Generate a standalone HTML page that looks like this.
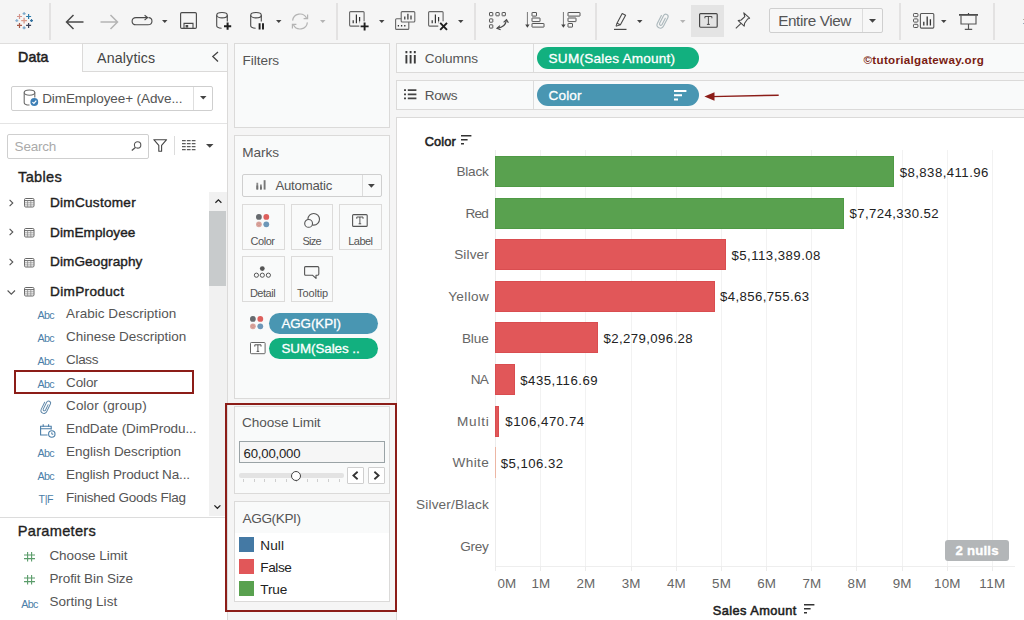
<!DOCTYPE html>
<html><head><meta charset="utf-8"><title>Tableau</title>
<style>
*{box-sizing:border-box;margin:0;padding:0}
html,body{width:1024px;height:620px;overflow:hidden;background:#f5f5f5;font-family:"Liberation Sans",sans-serif;color:#333}
.abs{position:absolute}
.card{position:absolute;background:#f9fafa;border:1px solid #d6d6d6}
.t{position:absolute;white-space:nowrap}
.pill{position:absolute;border-radius:11px}
svg{position:absolute;overflow:visible}
#root{position:absolute;left:0;top:0;width:1024px;height:620px;overflow:hidden}
</style></head><body><div id="root">
<!-- toolbar -->
<div class="abs" style="left:0px;top:0px;width:1024px;height:43px;background:#f5f5f5;"></div>
<div class="abs" style="left:49px;top:2.5px;width:2px;height:37.5px;background:#e3e2e2;"></div>
<div class="abs" style="left:336px;top:2.5px;width:2px;height:37.5px;background:#e3e2e2;"></div>
<div class="abs" style="left:473.5px;top:2.5px;width:2px;height:37.5px;background:#e3e2e2;"></div>
<div class="abs" style="left:594.5px;top:2.5px;width:2px;height:37.5px;background:#e3e2e2;"></div>
<div class="abs" style="left:899px;top:2.5px;width:2px;height:37.5px;background:#e3e2e2;"></div>
<div class="abs" style="left:993px;top:2.5px;width:2px;height:37.5px;background:#e3e2e2;"></div>
<svg style="left:0px;top:0px" width="40" height="40"><path d="M21.200000000000003 20.6H27.0M24.1 17.700000000000003V23.5" stroke="#da9a8a" stroke-width="1.3"/><path d="M17.0 16.5H22.0M19.5 14.0V19.0" stroke="#d3948c" stroke-width="1.2"/><path d="M26.1 16.5H31.1M28.6 14.0V19.0" stroke="#2f7dab" stroke-width="1.2"/><path d="M17.0 25.4H22.0M19.5 22.9V27.9" stroke="#a85a48" stroke-width="1.2"/><path d="M26.1 25.4H31.1M28.6 22.9V27.9" stroke="#3d4258" stroke-width="1.2"/><path d="M22.6 13.6H25.6M24.1 12.1V15.1" stroke="#7ea9ca" stroke-width="1.2"/><path d="M22.6 27.8H25.6M24.1 26.3V29.3" stroke="#6f9fc6" stroke-width="1.2"/><path d="M15.3 20.6H18.3M16.8 19.1V22.1" stroke="#86aed0" stroke-width="1.2"/><path d="M30.0 20.6H33.0M31.5 19.1V22.1" stroke="#3574a3" stroke-width="1.2"/></svg>
<svg style="left:65px;top:13.5px" width="19" height="16"><path d="M18.5 8H1.5M8.5 1L1.5 8L8.5 15" fill="none" stroke="#4a4a4a" stroke-width="1.5"/></svg>
<svg style="left:100px;top:13.5px" width="19" height="16"><path d="M0.5 8H17.5M10.5 1L17.5 8L10.5 15" fill="none" stroke="#b4b4b4" stroke-width="1.5"/></svg>
<svg style="left:131px;top:15px" width="22" height="11"><path d="M16.5 2.6H5 C-0.2 2.6 -0.2 9.8 5 9.8H17 C22.2 9.8 22.2 2.6 17.5 2.6" fill="none" stroke="#4a4a4a" stroke-width="1.1"/><path d="M13.6 0.2L16.6 2.6L13.6 5" fill="none" stroke="#4a4a4a" stroke-width="1.1"/></svg>
<svg style="left:162px;top:20px" width="5.5" height="3"><path d="M0 0H5.5L2.75 3Z" fill="#444"/></svg>
<svg style="left:180px;top:11.8px" width="17" height="17"><rect x=".6" y=".6" width="15.8" height="15.8" rx="1.2" fill="none" stroke="#4a4a4a" stroke-width="1.15"/><path d="M4 16V11.4H13V16" fill="none" stroke="#4a4a4a" stroke-width="1.1"/><rect x="5.6" y="13" width="2.6" height="2.6" fill="#4a4a4a"/></svg>
<svg style="left:215.5px;top:12.3px" width="16" height="18"><ellipse cx="6" cy="3.2" rx="5.3" ry="2.7" fill="none" stroke="#4a4a4a" stroke-width="1.1"/><path d="M.7 3.2V13.6C.7 15.2 3 16.2 5.6 16.2" fill="none" stroke="#4a4a4a" stroke-width="1.1"/><path d="M11.3 3.2V9.5" fill="none" stroke="#4a4a4a" stroke-width="1.1"/><path d="M8 14.2H15.2M11.6 10.6V17.8" stroke="#1e1e1e" stroke-width="2"/></svg>
<svg style="left:249.5px;top:12.3px" width="16" height="18"><ellipse cx="6" cy="3.2" rx="5.3" ry="2.7" fill="none" stroke="#4a4a4a" stroke-width="1.1"/><path d="M.7 3.2V13.6C.7 15.2 3 16.2 5.6 16.2" fill="none" stroke="#4a4a4a" stroke-width="1.1"/><path d="M11.3 3.2V9.5" fill="none" stroke="#4a4a4a" stroke-width="1.1"/><path d="M9.6 11.3V17.6M13 11.3V17.6" stroke="#1e1e1e" stroke-width="1.9"/></svg>
<svg style="left:276px;top:20px" width="5.5" height="3"><path d="M0 0H5.5L2.75 3Z" fill="#444"/></svg>
<svg style="left:291px;top:12.5px" width="18" height="17"><path d="M15.6 5.2A7.4 7.4 0 0 0 1.6 7.6" fill="none" stroke="#b4b4b4" stroke-width="1.2"/><path d="M2.4 11.8A7.4 7.4 0 0 0 16.4 9.4" fill="none" stroke="#b4b4b4" stroke-width="1.2"/><path d="M16.6 1.6V5.6H12.6" fill="none" stroke="#b4b4b4" stroke-width="1.2"/><path d="M1.4 15.4V11.4H5.4" fill="none" stroke="#b4b4b4" stroke-width="1.2"/></svg>
<svg style="left:319.5px;top:20px" width="5.5" height="3"><path d="M0 0H5.5L2.75 3Z" fill="#b4b4b4"/></svg>
<svg style="left:349px;top:11.3px" width="20" height="19"><rect x="0.6" y="0.6" width="14.5" height="14.5" rx="1" fill="#f5f5f5" stroke="#666" stroke-width="1.1"/><path d="M4.2 12.3V9.3M7.4 12.3V3.6M10.6 12.3V6" stroke="#333" stroke-width="1.2"/><rect x="10.3" y="10.3" width="10" height="9.5" fill="#f5f5f5"/><path d="M11.6 15.4H19.6M15.6 11.4V19.4" stroke="#1e1e1e" stroke-width="1.9"/></svg>
<svg style="left:379px;top:20px" width="5.5" height="3"><path d="M0 0H5.5L2.75 3Z" fill="#444"/></svg>
<svg style="left:395px;top:11.3px" width="20" height="19"><rect x="0.6" y="7.8" width="13.2" height="10.6" rx="1" fill="#f5f5f5" stroke="#666" stroke-width="1.1"/><path d="M3.4 15.6V14M6.6 15.6V14M9.8 15.6V14" stroke="#333" stroke-width="1.3"/><rect x="6.199999999999999" y="0.6" width="13.6" height="10.4" rx="1" fill="#f5f5f5" stroke="#666" stroke-width="1.1"/><path d="M9.8 8.4V5.6M12.9 8.4V2.8M16 8.4V4.4" stroke="#333" stroke-width="1.2"/></svg>
<svg style="left:428px;top:11.3px" width="20" height="19"><rect x="0.6" y="0.6" width="14.5" height="14.5" rx="1" fill="#f5f5f5" stroke="#666" stroke-width="1.1"/><path d="M4.2 12.3V9.3M7.4 12.3V3.6M10.6 12.3V6" stroke="#333" stroke-width="1.2"/><rect x="10.3" y="10.3" width="10" height="9.5" fill="#f5f5f5"/><path d="M12.2 11.8L19 18.8M19 11.8L12.2 18.8" stroke="#1e1e1e" stroke-width="1.9"/></svg>
<svg style="left:457.5px;top:20px" width="5.5" height="3"><path d="M0 0H5.5L2.75 3Z" fill="#444"/></svg>
<svg style="left:489.4px;top:11.9px" width="20" height="19"><rect x="0.5" y="0.5" width="3.3" height="3.3" rx=".4" fill="none" stroke="#555" stroke-width="1"/><rect x="6.9" y="0.5" width="3.3" height="3.3" rx=".4" fill="none" stroke="#555" stroke-width="1"/><rect x="13.1" y="0.5" width="3.3" height="3.3" rx=".4" fill="none" stroke="#555" stroke-width="1"/><rect x="0.5" y="6.9" width="3.3" height="3.3" rx=".4" fill="none" stroke="#555" stroke-width="1"/><rect x="0.5" y="12.8" width="3.3" height="3.3" rx=".4" fill="none" stroke="#555" stroke-width="1"/><path d="M8.6 16.2C13.6 15.6 16.8 12.6 17.4 8.2" fill="none" stroke="#4a4a4a" stroke-width="1.2"/><path d="M11 13.6L8 16.3L11.6 17.8" fill="none" stroke="#4a4a4a" stroke-width="1.2"/><path d="M14.6 10.4L17.5 7.6L19.4 10.8" fill="none" stroke="#4a4a4a" stroke-width="1.2"/></svg>
<svg style="left:525px;top:12px" width="20" height="17"><path d="M2.4 0V14" stroke="#777" stroke-width="1"/><path d="M0.2 12.6L2.4 15.8L4.6 12.6Z" fill="#444"/><rect x="7" y="0.5" width="4.5" height="3.6" rx=".3" fill="none" stroke="#555" stroke-width="1"/><rect x="7" y="6" width="8" height="3.6" rx=".3" fill="none" stroke="#555" stroke-width="1"/><rect x="7" y="11.5" width="12" height="3.6" rx=".3" fill="none" stroke="#555" stroke-width="1"/></svg>
<svg style="left:560.5px;top:12px" width="20" height="17"><path d="M2.4 0V14" stroke="#777" stroke-width="1"/><path d="M0.2 12.6L2.4 15.8L4.6 12.6Z" fill="#444"/><rect x="7" y="0.5" width="12" height="3.6" rx=".3" fill="none" stroke="#555" stroke-width="1"/><rect x="7" y="6" width="8" height="3.6" rx=".3" fill="none" stroke="#555" stroke-width="1"/><rect x="7" y="11.5" width="4.5" height="3.6" rx=".3" fill="none" stroke="#555" stroke-width="1"/></svg>
<svg style="left:613.5px;top:13px" width="13" height="17"><path d="M8.2 .6L11.6 2.2L6.4 11.8L3 10.2Z" fill="none" stroke="#4a4a4a" stroke-width="1.1" stroke-linejoin="round"/><path d="M3 10.2L2 13.2L6.4 11.8" fill="none" stroke="#4a4a4a" stroke-width="1"/><path d="M0 16.4H12.5" stroke="#4a4a4a" stroke-width="1.2"/></svg>
<svg style="left:637px;top:20px" width="5.5" height="3"><path d="M0 0H5.5L2.75 3Z" fill="#444"/></svg>
<svg style="left:0;top:0" width="1" height="1"><path transform="translate(662.8 20.7) rotate(27) scale(1.25)" d="M0.9 -2.6V3A1.1 1.1 0 0 1 -1.3 3V-4A1.9 1.9 0 0 1 2.5 -4V3.8A2.7 2.7 0 0 1 -2.9 3.8V-3.2" fill="none" stroke="#adb9bd" stroke-width="0.92" stroke-linecap="round"/></svg>
<svg style="left:680px;top:20px" width="5.5" height="3"><path d="M0 0H5.5L2.75 3Z" fill="#b4b4b4"/></svg>
<div class="abs" style="left:691px;top:4.5px;width:33px;height:32.5px;background:#e4e4e4;"></div>
<svg style="left:698.6px;top:12.9px" width="19" height="15"><rect x=".6" y=".6" width="17.6" height="13.6" rx="1" fill="none" stroke="#444" stroke-width="1.15"/><path d="M5.9 3.5H12.9V5.3M5.9 5.3V3.5M9.4 3.5V11.4M7.9 11.4H10.9" fill="none" stroke="#333" stroke-width=".85"/></svg>
<svg style="left:735px;top:11.6px" width="16" height="17"><path d="M8.8 .8L14.6 6.2L12.6 7L9.6 11.2L9.2 14.2L3.2 8.6L6.2 8L9.8 4.6Z" fill="none" stroke="#4a4a4a" stroke-width="1.1" stroke-linejoin="round"/><path d="M6 11.4L.8 16.4" stroke="#4a4a4a" stroke-width="1.1"/></svg>
<div class="abs" style="left:769px;top:8px;width:114px;height:24.5px;background:#f7f7f7;border:1px solid #cfcfcf;border-radius:2px;"></div>
<div class="abs" style="left:862px;top:9px;width:1px;height:22.5px;background:#dcdcdc;"></div>
<div class="t" style="top:12px;font-size:15.3px;line-height:18px;color:#555;left:778.2px;letter-spacing:-0.390px;">Entire View</div>
<svg style="left:868.7px;top:19px" width="7" height="3.8"><path d="M0 0H7L3.5 3.8Z" fill="#444"/></svg>
<svg style="left:913.2px;top:12.9px" width="22" height="17"><rect x=".5" y="0.5" width="4.4" height="3.2" rx=".8" fill="none" stroke="#555" stroke-width="1"/><rect x=".5" y="5.9" width="4.4" height="3.2" rx=".8" fill="none" stroke="#555" stroke-width="1"/><rect x=".5" y="11.3" width="4.4" height="3.2" rx=".8" fill="none" stroke="#555" stroke-width="1"/><rect x="7.4" y=".5" width="13.4" height="14.6" rx="1" fill="none" stroke="#555" stroke-width="1.1"/><path d="M10.8 12.6V8.8M14.2 12.6V3.6M17.4 12.6V6.2" stroke="#333" stroke-width="1.3"/></svg>
<svg style="left:941px;top:20px" width="5.5" height="3"><path d="M0 0H5.5L2.75 3Z" fill="#444"/></svg>
<svg style="left:959px;top:12.6px" width="19" height="18"><path d="M0 1.9H19" stroke="#444" stroke-width="1.7"/><path d="M9.5 0V1.6" stroke="#444" stroke-width="1.2"/><path d="M2 2.4V11H17V2.4" fill="none" stroke="#555" stroke-width="1.15"/><path d="M9.5 11V16M5.8 16.3H13.2" stroke="#555" stroke-width="1.15"/></svg>
<div class="abs" style="left:1023px;top:18.6px;width:1px;height:1.4px;background:#b5b0a0;"></div>
<div class="abs" style="left:1023px;top:22.8px;width:1px;height:1.4px;background:#9ab;"></div>
<!-- left pane -->
<div class="abs" style="left:0px;top:43px;width:228px;height:577px;background:#fff;border:none;border-right:1px solid #dbdad9;border-top:1px solid #dfdedd;"></div>
<div class="abs" style="left:82px;top:43px;width:146px;height:29px;background:#f9fafa;border:1px solid #dbdad9;"></div>
<div class="t" style="top:49px;font-size:14.2px;line-height:17px;color:#1e1e1e;left:18px;-webkit-text-stroke:0.55px #1e1e1e;letter-spacing:0.158px;">Data</div>
<div class="t" style="top:50px;font-size:14.2px;line-height:17px;color:#444;left:97px;letter-spacing:0.180px;">Analytics</div>
<svg style="left:211px;top:51px" width="9" height="12"><path d="M7 1 L1.8 5.5 L7 10.5" fill="none" stroke="#444" stroke-width="1.3"/></svg>
<div class="abs" style="left:11px;top:86px;width:202px;height:24.5px;background:#fff;border:1px solid #cfcfcf;border-radius:2px;"></div>
<div class="abs" style="left:192.5px;top:87px;width:1px;height:22.5px;background:#dedede;"></div>
<svg style="left:23px;top:89px" width="17" height="18" viewBox="0 0 17 18"><ellipse cx="6.5" cy="3.6" rx="5.3" ry="2.6" fill="#fff" stroke="#6b6b6b" stroke-width="1.1"/><path d="M1.2 3.6 V13.4 C1.2 15 3.6 16 6.5 16" fill="none" stroke="#6b6b6b" stroke-width="1.1"/><path d="M11.8 3.6 V8.6" fill="none" stroke="#6b6b6b" stroke-width="1.1"/><circle cx="11.3" cy="13" r="3.9" fill="#3d7fb6"/><path d="M9.4 13.1 L10.9 14.5 L13.3 11.7" fill="none" stroke="#fff" stroke-width="1.2"/></svg>
<div class="t" style="top:91px;font-size:13.5px;line-height:16px;color:#555;left:42.2px;letter-spacing:-0.095px;">DimEmployee+ (Adve...</div>
<svg style="left:200px;top:96.3px" width="6.5" height="3.6"><path d="M0 0H6.5L3.25 3.6Z" fill="#444"/></svg>
<div class="abs" style="left:0px;top:122.5px;width:227px;height:1px;background:#e4e4e4;"></div>
<div class="abs" style="left:7px;top:134px;width:142px;height:24.5px;background:#fff;border:1px solid #cfcfcf;border-radius:2px;"></div>
<div class="t" style="top:139px;font-size:13.5px;line-height:16px;color:#aaa;left:14.6px;letter-spacing:-0.197px;">Search</div>
<svg style="left:130.5px;top:141px" width="11" height="10" viewBox="0 0 11 10"><circle cx="6.6" cy="3.9" r="3.2" fill="none" stroke="#555" stroke-width="1.1"/><path d="M4.4 6.4 L0.8 9.6" stroke="#555" stroke-width="1.3"/></svg>
<svg style="left:153px;top:139.3px" width="15" height="13" viewBox="0 0 15 13"><path d="M0.8 0.7 H13.6 L8.6 6.4 V12.3 H5.8 V6.4 Z" fill="none" stroke="#444" stroke-width="1.1" stroke-linejoin="round"/></svg>
<div class="abs" style="left:174px;top:136px;width:1px;height:19px;background:#dcdcdc;"></div>
<svg style="left:181.7px;top:139.9px" width="13.5" height="10.2" viewBox="0 0 13.5 10.2"><g stroke="#5c5c5c" stroke-width="1.1"><path d="M0 .6H13.5M0 3.6H13.5M0 6.6H13.5M0 9.6H13.5" stroke-dasharray="3.7 1.2"/></g></svg>
<svg style="left:205.5px;top:144px" width="7.5" height="3.8"><path d="M0 0H7.5L3.75 3.8Z" fill="#444"/></svg>
<div class="t" style="top:168px;font-size:14.6px;line-height:18px;color:#1e1e1e;left:18px;-webkit-text-stroke:0.35px #1e1e1e;letter-spacing:0.335px;">Tables</div>
<svg style="left:8.5px;top:198.7px" width="5" height="8"><path d="M0.6 0.8 L3.8 4 L0.6 7.2" fill="none" stroke="#555" stroke-width="1.1"/></svg>
<svg style="left:24.3px;top:198.2px" width="10.5" height="9.5" viewBox="0 0 10.5 9.5"><rect x=".5" y=".5" width="9.5" height="8.5" rx="1.2" fill="#fff" stroke="#666"/><path d="M.5 2.6H10" stroke="#666" stroke-width="1"/><path d="M.5 4.8H10M.5 6.9H10M3.6 2.6V9M6.8 2.6V9" stroke="#8a8a8a" stroke-width=".8"/></svg>
<div class="t" style="top:195px;font-size:13.6px;line-height:16px;color:#1e1e1e;left:50px;-webkit-text-stroke:0.4px #1e1e1e;letter-spacing:0.264px;">DimCustomer</div>
<svg style="left:8.5px;top:228.4px" width="5" height="8"><path d="M0.6 0.8 L3.8 4 L0.6 7.2" fill="none" stroke="#555" stroke-width="1.1"/></svg>
<svg style="left:24.3px;top:227.9px" width="10.5" height="9.5" viewBox="0 0 10.5 9.5"><rect x=".5" y=".5" width="9.5" height="8.5" rx="1.2" fill="#fff" stroke="#666"/><path d="M.5 2.6H10" stroke="#666" stroke-width="1"/><path d="M.5 4.8H10M.5 6.9H10M3.6 2.6V9M6.8 2.6V9" stroke="#8a8a8a" stroke-width=".8"/></svg>
<div class="t" style="top:225px;font-size:13.6px;line-height:16px;color:#1e1e1e;left:50px;-webkit-text-stroke:0.4px #1e1e1e;letter-spacing:0.081px;">DimEmployee</div>
<svg style="left:8.5px;top:258px" width="5" height="8"><path d="M0.6 0.8 L3.8 4 L0.6 7.2" fill="none" stroke="#555" stroke-width="1.1"/></svg>
<svg style="left:24.3px;top:257.5px" width="10.5" height="9.5" viewBox="0 0 10.5 9.5"><rect x=".5" y=".5" width="9.5" height="8.5" rx="1.2" fill="#fff" stroke="#666"/><path d="M.5 2.6H10" stroke="#666" stroke-width="1"/><path d="M.5 4.8H10M.5 6.9H10M3.6 2.6V9M6.8 2.6V9" stroke="#8a8a8a" stroke-width=".8"/></svg>
<div class="t" style="top:254px;font-size:13.6px;line-height:16px;color:#1e1e1e;left:50px;-webkit-text-stroke:0.4px #1e1e1e;letter-spacing:0.090px;">DimGeography</div>
<svg style="left:6.5px;top:289.5px" width="9" height="5"><path d="M0.6 0.5 L4.3 4.2 L8 0.5" fill="none" stroke="#555" stroke-width="1.1"/></svg>
<svg style="left:24.3px;top:287.0px" width="10.5" height="9.5" viewBox="0 0 10.5 9.5"><rect x=".5" y=".5" width="9.5" height="8.5" rx="1.2" fill="#fff" stroke="#666"/><path d="M.5 2.6H10" stroke="#666" stroke-width="1"/><path d="M.5 4.8H10M.5 6.9H10M3.6 2.6V9M6.8 2.6V9" stroke="#8a8a8a" stroke-width=".8"/></svg>
<div class="t" style="top:284px;font-size:13.6px;line-height:16px;color:#1e1e1e;left:50px;-webkit-text-stroke:0.4px #1e1e1e;letter-spacing:0.328px;">DimProduct</div>
<div class="t" style="top:309px;font-size:10.7px;line-height:13px;color:#4b7ea8;left:37.4px;letter-spacing:-0.574px;">Abc</div>
<div class="t" style="top:306px;font-size:13.5px;line-height:16px;color:#555;left:66.1px;letter-spacing:0.036px;">Arabic Description</div>
<div class="t" style="top:332px;font-size:10.7px;line-height:13px;color:#4b7ea8;left:37.4px;letter-spacing:-0.574px;">Abc</div>
<div class="t" style="top:329px;font-size:13.5px;line-height:16px;color:#555;left:66.1px;letter-spacing:-0.038px;">Chinese Description</div>
<div class="t" style="top:355px;font-size:10.7px;line-height:13px;color:#4b7ea8;left:37.4px;letter-spacing:-0.574px;">Abc</div>
<div class="t" style="top:352px;font-size:13.5px;line-height:16px;color:#555;left:66.1px;letter-spacing:-0.353px;">Class</div>
<div class="t" style="top:378px;font-size:10.7px;line-height:13px;color:#4b7ea8;left:37.4px;letter-spacing:-0.574px;">Abc</div>
<div class="t" style="top:375px;font-size:13.5px;line-height:16px;color:#555;left:66.1px;letter-spacing:-0.133px;">Color</div>
<svg style="left:0;top:0" width="1" height="1"><path transform="translate(46 406.8) rotate(26) scale(1.1)" d="M0.9 -2.6V3A1.1 1.1 0 0 1 -1.3 3V-4A1.9 1.9 0 0 1 2.5 -4V3.8A2.7 2.7 0 0 1 -2.9 3.8V-3.2" fill="none" stroke="#5d86a8" stroke-width="0.86" stroke-linecap="round"/></svg>
<div class="t" style="top:398px;font-size:13.5px;line-height:16px;color:#555;left:66.1px;letter-spacing:0.090px;">Color (group)</div>
<svg style="left:39.8px;top:423.8px" width="16" height="14" viewBox="0 0 16 14"><path d="M7.6 11H.6V2.3H11.2V5.6" fill="none" stroke="#4b7ea8" stroke-width="1.1"/><path d="M.6 4.8H11.2M3.2 .3V2.8M8.6 .3V2.8" stroke="#4b7ea8" stroke-width="1.1"/><circle cx="11.8" cy="10" r="3.2" fill="#fff" stroke="#4b7ea8" stroke-width="1.1"/><path d="M11.8 8.3V10.2H13.3" fill="none" stroke="#4b7ea8" stroke-width="1"/></svg>
<div class="t" style="top:421px;font-size:13.5px;line-height:16px;color:#555;left:66.1px;letter-spacing:-0.088px;">EndDate (DimProdu...</div>
<div class="t" style="top:447px;font-size:10.7px;line-height:13px;color:#4b7ea8;left:37.4px;letter-spacing:-0.574px;">Abc</div>
<div class="t" style="top:444px;font-size:13.5px;line-height:16px;color:#555;left:66.1px;letter-spacing:-0.030px;">English Description</div>
<div class="t" style="top:470px;font-size:10.7px;line-height:13px;color:#4b7ea8;left:37.4px;letter-spacing:-0.574px;">Abc</div>
<div class="t" style="top:467px;font-size:13.5px;line-height:16px;color:#555;left:66.1px;letter-spacing:-0.144px;">English Product Na...</div>
<div class="t" style="top:493px;font-size:10.7px;line-height:13px;color:#4b7ea8;left:38.6px;letter-spacing:-0.448px;">T|F</div>
<div class="t" style="top:490px;font-size:13.5px;line-height:16px;color:#555;left:66.1px;letter-spacing:-0.257px;">Finished Goods Flag</div>
<div class="abs" style="left:14px;top:370px;width:180px;height:24px;border:2px solid #8c1d18;"></div>
<div class="abs" style="left:209px;top:192px;width:17.5px;height:324px;background:#f1f1f1;"></div>
<div class="abs" style="left:209px;top:210.7px;width:17px;height:75px;background:#c8cbcc;"></div>
<svg style="left:214.6px;top:199.3px" width="7" height="4"><path d="M0.4 3.8 L3.4 0.9 L6.4 3.8" fill="none" stroke="#222" stroke-width="1.25"/></svg>
<svg style="left:214.4px;top:504.9px" width="7" height="4"><path d="M0.4 0.4 L3.4 3.3 L6.4 0.4" fill="none" stroke="#222" stroke-width="1.25"/></svg>
<div class="abs" style="left:0px;top:516.5px;width:227px;height:1px;background:#dcdcdc;"></div>
<div class="t" style="top:522px;font-size:14.6px;line-height:18px;color:#1e1e1e;left:17.8px;-webkit-text-stroke:0.35px #1e1e1e;letter-spacing:0.276px;">Parameters</div>
<svg style="left:24.3px;top:552.4px" width="11" height="9.6"><path d="M3.6 0V9.6M7.6 0V9.6M0 3H11M0 6.6H11" stroke="#5a9c6a" stroke-width="1.1"/></svg>
<div class="t" style="top:548px;font-size:13.5px;line-height:16px;color:#555;left:49.4px;letter-spacing:-0.058px;">Choose Limit</div>
<svg style="left:24.3px;top:575.4px" width="11" height="9.6"><path d="M3.6 0V9.6M7.6 0V9.6M0 3H11M0 6.6H11" stroke="#5a9c6a" stroke-width="1.1"/></svg>
<div class="t" style="top:571px;font-size:13.5px;line-height:16px;color:#555;left:49.4px;letter-spacing:-0.086px;">Profit Bin Size</div>
<div class="t" style="top:598px;font-size:10.7px;line-height:13px;color:#4b7ea8;left:21.3px;letter-spacing:-0.674px;">Abc</div>
<div class="t" style="top:594px;font-size:13.5px;line-height:16px;color:#555;left:49.4px;letter-spacing:0.021px;">Sorting List</div>
<!-- middle cards -->
<div class="abs" style="left:234px;top:43px;width:156px;height:85px;background:#f9fafa;border:1px solid #dbdad9;"></div>
<div class="t" style="top:53px;font-size:13.6px;line-height:16px;color:#555;left:242.6px;letter-spacing:-0.074px;">Filters</div>
<div class="abs" style="left:234px;top:135px;width:156px;height:263.5px;background:#f9fafa;border:1px solid #dbdad9;"></div>
<div class="t" style="top:145px;font-size:13.6px;line-height:16px;color:#555;left:242.3px;letter-spacing:-0.083px;">Marks</div>
<div class="abs" style="left:242px;top:174px;width:140px;height:23px;background:#f9fafa;border:1px solid #cfcfcf;border-radius:2px;"></div>
<div class="abs" style="left:361.5px;top:175px;width:1px;height:21px;background:#dcdcdc;"></div>
<svg style="left:256.3px;top:179.7px" width="10.5" height="10"><path d="M1.3 2.8V9.6M4.9 4.4V9.6" stroke="#8a8a8a" stroke-width="1.8"/><path d="M1.3 5.6V9.6M4.9 6.6V9.6" stroke="#707070" stroke-width="1.8"/><path d="M8.6 0.2V9.6" stroke="#777" stroke-width="1.9"/></svg>
<div class="t" style="top:178px;font-size:13.2px;line-height:16px;color:#555;left:275.4px;letter-spacing:-0.205px;">Automatic</div>
<svg style="left:368px;top:184px" width="6.8" height="3.8"><path d="M0 0H6.8L3.4 3.8Z" fill="#444"/></svg>
<div class="abs" style="left:242px;top:204px;width:43px;height:46px;background:#f9fafa;border:1px solid #dcdbda;"></div>
<div class="abs" style="left:291px;top:204px;width:42px;height:46px;background:#f9fafa;border:1px solid #dcdbda;"></div>
<div class="abs" style="left:339px;top:204px;width:43px;height:46px;background:#f9fafa;border:1px solid #dcdbda;"></div>
<div class="abs" style="left:242px;top:255.5px;width:43px;height:46.5px;background:#f9fafa;border:1px solid #dcdbda;"></div>
<div class="abs" style="left:291px;top:255.5px;width:42px;height:46.5px;background:#f9fafa;border:1px solid #dcdbda;"></div>
<svg style="left:256px;top:213.7px" width="14" height="14"><circle cx="2.9" cy="2.9" r="2.9" fill="#666a6e"/><circle cx="10.3" cy="2.9" r="2.9" fill="#dd5f5c"/><circle cx="2.9" cy="10.3" r="2.9" fill="#dba79f"/><circle cx="2.9" cy="10.3" r="1.305" fill="none" stroke="#c98c84" stroke-width=".6"/><circle cx="10.3" cy="10.3" r="2.9" fill="#6d97b8"/></svg>
<svg style="left:304px;top:212.5px" width="17" height="15"><circle cx="9.7" cy="6.3" r="5.8" fill="none" stroke="#555" stroke-width="1.1"/><circle cx="4.6" cy="10.4" r="3.9" fill="#f9fafa" stroke="#555" stroke-width="1.1"/></svg>
<svg style="left:351.9px;top:214.2px" width="16" height="13"><rect x=".6" y=".6" width="14.6" height="11.8" rx="1" fill="none" stroke="#555" stroke-width="1.1"/><path d="M4.8 3H11V4.8M4.8 4.8V3M7.9 3V9.8M6.6 9.8H9.2" fill="none" stroke="#444" stroke-width=".9"/></svg>
<div class="t" style="top:235px;font-size:11px;line-height:13px;color:#555;left:250.6px;letter-spacing:-0.479px;">Color</div>
<div class="t" style="top:235px;font-size:11px;line-height:13px;color:#555;left:302.4px;letter-spacing:-0.702px;">Size</div>
<div class="t" style="top:235px;font-size:11px;line-height:13px;color:#555;left:348.3px;letter-spacing:-0.564px;">Label</div>
<svg style="left:254px;top:266px" width="17" height="12"><circle cx="8.3" cy="2.6" r="2.4" fill="#555"/><circle cx="2.4" cy="9.2" r="2.1" fill="none" stroke="#555" stroke-width="1"/><circle cx="8.3" cy="9.2" r="2.1" fill="none" stroke="#555" stroke-width="1"/><circle cx="14.4" cy="9.2" r="2.1" fill="none" stroke="#555" stroke-width="1"/></svg>
<svg style="left:304.4px;top:266.3px" width="16" height="13"><path d="M1.6 .6H13.6C14.4 .6 14.8 1 14.8 1.8V8C14.8 8.8 14.4 9.2 13.6 9.2H12V12.4L8.4 9.2H1.6C.8 9.2 .6 8.8 .6 8V1.8C.6 1 .8 .6 1.6 .6Z" fill="none" stroke="#555" stroke-width="1.1" stroke-linejoin="round"/></svg>
<div class="t" style="top:287px;font-size:11px;line-height:13px;color:#555;left:249.9px;letter-spacing:-0.471px;">Detail</div>
<div class="t" style="top:287px;font-size:11px;line-height:13px;color:#555;left:297.1px;letter-spacing:-0.114px;">Tooltip</div>
<svg style="left:250.2px;top:316.2px" width="14" height="14"><circle cx="2.9" cy="2.9" r="2.9" fill="#666a6e"/><circle cx="10.3" cy="2.9" r="2.9" fill="#dd5f5c"/><circle cx="2.9" cy="10.3" r="2.9" fill="#dba79f"/><circle cx="2.9" cy="10.3" r="1.305" fill="none" stroke="#c98c84" stroke-width=".6"/><circle cx="10.3" cy="10.3" r="2.9" fill="#6d97b8"/></svg>
<div class="pill" style="left:269.3px;top:312.6px;width:108.3px;height:21.4px;background:#4996b2"></div>
<div class="t" style="top:316px;font-size:13.4px;line-height:16px;color:#fff;left:281.4px;-webkit-text-stroke:0.3px #fff;letter-spacing:-0.083px;">AGG(KPI)</div>
<svg style="left:249.7px;top:342.4px" width="16" height="12.4"><rect x=".5" y=".5" width="14.6" height="11.2" rx=".8" fill="#fff" stroke="#666" stroke-width="1"/><path d="M4.8 2.8H11V4.6M4.8 4.6V2.8M7.9 2.8V9.4M6.6 9.4H9.2" fill="none" stroke="#444" stroke-width=".9"/></svg>
<div class="pill" style="left:269.3px;top:337.6px;width:108.3px;height:21.4px;background:#12b07f"></div>
<div class="t" style="top:341px;font-size:13.4px;line-height:16px;color:#fff;left:281.4px;-webkit-text-stroke:0.3px #fff;letter-spacing:-0.056px;">SUM(Sales ..</div>
<div class="abs" style="left:234px;top:406px;width:156px;height:88px;background:#f9fafa;border:1px solid #dbdad9;"></div>
<div class="t" style="top:415px;font-size:13.6px;line-height:16px;color:#555;left:242px;letter-spacing:-0.062px;">Choose Limit</div>
<div class="abs" style="left:239px;top:441px;width:146px;height:22px;background:#f6f6f6;border:1px solid #9aa3a6;"></div>
<div class="t" style="top:446px;font-size:13.2px;line-height:16px;color:#222;left:243.5px;letter-spacing:-0.197px;">60,00,000</div>
<div class="abs" style="left:239px;top:473.3px;width:105px;height:4.4px;background:#e3e3e3;border:none;border-radius:2px;"></div>
<div class="abs" style="left:243.0px;top:479px;width:1px;height:3px;background:#cfcfcf;"></div>
<div class="abs" style="left:253.7px;top:479px;width:1px;height:3px;background:#cfcfcf;"></div>
<div class="abs" style="left:264.3px;top:479px;width:1px;height:3px;background:#cfcfcf;"></div>
<div class="abs" style="left:274.9px;top:479px;width:1px;height:3px;background:#cfcfcf;"></div>
<div class="abs" style="left:285.5px;top:479px;width:1px;height:3px;background:#cfcfcf;"></div>
<div class="abs" style="left:296.1px;top:479px;width:1px;height:3px;background:#cfcfcf;"></div>
<div class="abs" style="left:306.7px;top:479px;width:1px;height:3px;background:#cfcfcf;"></div>
<div class="abs" style="left:317.3px;top:479px;width:1px;height:3px;background:#cfcfcf;"></div>
<div class="abs" style="left:327.9px;top:479px;width:1px;height:3px;background:#cfcfcf;"></div>
<div class="abs" style="left:338.5px;top:479px;width:1px;height:3px;background:#cfcfcf;"></div>
<div class="abs" style="left:290.9px;top:470.6px;width:10px;height:10px;border-radius:50%;background:#fff;border:1.3px solid #444"></div>
<div class="abs" style="left:347.4px;top:467px;width:17px;height:17px;background:#fff;border:1px solid #cfcfcf;border-radius:1px;"></div>
<div class="abs" style="left:368px;top:467px;width:17px;height:17px;background:#fff;border:1px solid #cfcfcf;border-radius:1px;"></div>
<svg style="left:352.3px;top:471.3px" width="7" height="9"><path d="M5.6 .8L1.4 4.5L5.6 8.2" fill="none" stroke="#333" stroke-width="1.8"/></svg>
<svg style="left:373.2px;top:471.3px" width="7" height="9"><path d="M1.4 .8L5.6 4.5L1.4 8.2" fill="none" stroke="#333" stroke-width="1.8"/></svg>
<div class="abs" style="left:234px;top:501px;width:156px;height:100.5px;background:#fff;border:1px solid #dbdad9;"></div>
<div class="abs" style="left:235px;top:502px;width:154px;height:31px;background:#f9fafa;"></div>
<div class="t" style="top:511px;font-size:13.6px;line-height:16px;color:#555;left:242.6px;letter-spacing:-0.398px;">AGG(KPI)</div>
<div class="abs" style="left:238.7px;top:537px;width:15.2px;height:14.8px;background:#4479a4;"></div>
<div class="t" style="top:538px;font-size:13.6px;line-height:16px;color:#222;left:260.3px;letter-spacing:0.095px;">Null</div>
<div class="abs" style="left:238.7px;top:559px;width:15.2px;height:14.8px;background:#e15759;"></div>
<div class="t" style="top:560px;font-size:13.6px;line-height:16px;color:#222;left:260.3px;letter-spacing:-0.410px;">False</div>
<div class="abs" style="left:238.7px;top:581px;width:15.2px;height:14.8px;background:#59a14f;"></div>
<div class="t" style="top:582px;font-size:13.6px;line-height:16px;color:#222;left:260.3px;letter-spacing:-0.163px;">True</div>
<!-- shelves -->
<div class="abs" style="left:396px;top:43px;width:630px;height:30px;background:#f9fafa;border:1px solid #dbdad9;"></div>
<div class="abs" style="left:396px;top:80px;width:630px;height:30px;background:#f9fafa;border:1px solid #dbdad9;"></div>
<div class="abs" style="left:533.4px;top:44px;width:1px;height:28px;background:#dcdcdc;"></div>
<div class="abs" style="left:533.4px;top:81px;width:1px;height:28px;background:#dcdcdc;"></div>
<svg style="left:404.6px;top:50.6px" width="12" height="13"><path d="M1.4 4V12.6M5.6 4V12.6M9.8 4V12.6" stroke="#3c3c3c" stroke-width="1.9"/><path d="M1.4 0V2.2M5.6 0V2.2M9.8 0V2.2" stroke="#3c3c3c" stroke-width="1.9"/></svg>
<div class="t" style="top:51px;font-size:13.6px;line-height:16px;color:#555;left:424.8px;letter-spacing:-0.063px;">Columns</div>
<svg style="left:403.9px;top:88.9px" width="13" height="11"><path d="M3.8 1.2H12.4M3.8 5.3H12.4M3.8 9.4H12.4" stroke="#444" stroke-width="1.7"/><path d="M0 1.2H2M0 5.3H2M0 9.4H2" stroke="#444" stroke-width="1.7"/></svg>
<div class="t" style="top:88px;font-size:13.6px;line-height:16px;color:#555;left:424.8px;letter-spacing:-0.450px;">Rows</div>
<div class="pill" style="left:536.6px;top:47px;width:162.2px;height:22px;background:#12b07f"></div>
<div class="t" style="top:51px;font-size:13.6px;line-height:16px;color:#fff;left:548.6px;-webkit-text-stroke:0.3px #fff;letter-spacing:0.203px;">SUM(Sales Amount)</div>
<div class="pill" style="left:536.6px;top:84px;width:162.2px;height:22px;background:#4996b2"></div>
<div class="t" style="top:88px;font-size:13.6px;line-height:16px;color:#fff;left:548.6px;-webkit-text-stroke:0.3px #fff;letter-spacing:0.123px;">Color</div>
<svg style="left:674.2px;top:89.8px" width="13" height="11"><path d="M0 1H12.4M0 5.2H8M0 9.4H4" stroke="#fff" stroke-width="2"/></svg>
<svg style="left:703px;top:90px" width="78" height="12"><path d="M75.7 5.2L8 6.6" stroke="#8c1d18" stroke-width="1.4"/><path d="M1.4 6.6L11.5 2.2L11.5 10.8Z" fill="#8c1d18"/></svg>
<div class="t" style="top:53px;font-size:11.6px;line-height:14px;color:#7a1c12;left:863.5px;font-weight:bold;letter-spacing:0.304px;">©tutorialgateway.org</div>
<!-- view -->
<div class="abs" style="left:396px;top:117px;width:630px;height:510px;background:#fff;border:1px solid #dbdad9;"></div>
<div class="t" style="top:134px;font-size:12.8px;line-height:15px;color:#1e1e1e;left:424.7px;-webkit-text-stroke:0.55px #1e1e1e;letter-spacing:0.121px;">Color</div>
<svg style="left:461.3px;top:134.9px" width="11" height="10"><path d="M0 .8H10.4M0 4.8H6.6M0 8.8H3" stroke="#333" stroke-width="1.5"/></svg>
<div class="abs" style="left:540px;top:149.5px;width:1px;height:417px;background:#f2f2f2;"></div>
<div class="abs" style="left:585px;top:149.5px;width:1px;height:417px;background:#f2f2f2;"></div>
<div class="abs" style="left:631px;top:149.5px;width:1px;height:417px;background:#f2f2f2;"></div>
<div class="abs" style="left:676px;top:149.5px;width:1px;height:417px;background:#f2f2f2;"></div>
<div class="abs" style="left:721px;top:149.5px;width:1px;height:417px;background:#f2f2f2;"></div>
<div class="abs" style="left:766px;top:149.5px;width:1px;height:417px;background:#f2f2f2;"></div>
<div class="abs" style="left:811px;top:149.5px;width:1px;height:417px;background:#f2f2f2;"></div>
<div class="abs" style="left:856px;top:149.5px;width:1px;height:417px;background:#f2f2f2;"></div>
<div class="abs" style="left:902px;top:149.5px;width:1px;height:417px;background:#f2f2f2;"></div>
<div class="abs" style="left:947px;top:149.5px;width:1px;height:417px;background:#f2f2f2;"></div>
<div class="abs" style="left:992px;top:149.5px;width:1px;height:417px;background:#f2f2f2;"></div>
<div class="abs" style="left:495px;top:149.5px;width:1px;height:421px;background:#ececec;"></div>
<div class="abs" style="left:495px;top:566px;width:520px;height:1px;background:#eeeeee;"></div>
<div class="abs" style="left:495px;top:566px;width:1px;height:5px;background:#ececec;"></div>
<div class="abs" style="left:540px;top:566px;width:1px;height:5px;background:#ececec;"></div>
<div class="abs" style="left:585px;top:566px;width:1px;height:5px;background:#ececec;"></div>
<div class="abs" style="left:631px;top:566px;width:1px;height:5px;background:#ececec;"></div>
<div class="abs" style="left:676px;top:566px;width:1px;height:5px;background:#ececec;"></div>
<div class="abs" style="left:721px;top:566px;width:1px;height:5px;background:#ececec;"></div>
<div class="abs" style="left:766px;top:566px;width:1px;height:5px;background:#ececec;"></div>
<div class="abs" style="left:811px;top:566px;width:1px;height:5px;background:#ececec;"></div>
<div class="abs" style="left:856px;top:566px;width:1px;height:5px;background:#ececec;"></div>
<div class="abs" style="left:902px;top:566px;width:1px;height:5px;background:#ececec;"></div>
<div class="abs" style="left:947px;top:566px;width:1px;height:5px;background:#ececec;"></div>
<div class="abs" style="left:992px;top:566px;width:1px;height:5px;background:#ececec;"></div>
<div class="t" style="top:164px;font-size:13.6px;line-height:16px;color:#666;right:535.41px;letter-spacing:-0.210px;">Black</div>
<div class="abs" style="left:495px;top:156px;width:399.3px;height:31px;background:#59a14f;border:1px solid #4f9a45;"></div>
<div class="t" style="top:165px;font-size:13.2px;line-height:16px;color:#222;left:899.7px;letter-spacing:0.442px;">$8,838,411.96</div>
<div class="t" style="top:206px;font-size:13.6px;line-height:16px;color:#666;right:536.08px;letter-spacing:-0.879px;">Red</div>
<div class="abs" style="left:495px;top:198px;width:349.0px;height:31px;background:#59a14f;border:1px solid #4f9a45;"></div>
<div class="t" style="top:206px;font-size:13.2px;line-height:16px;color:#222;left:849.4px;letter-spacing:0.412px;">$7,724,330.52</div>
<div class="t" style="top:247px;font-size:13.6px;line-height:16px;color:#666;right:535.07px;letter-spacing:0.133px;">Silver</div>
<div class="abs" style="left:495px;top:239px;width:231.1px;height:31px;background:#e15759;border:1px solid #d94d50;"></div>
<div class="t" style="top:248px;font-size:13.2px;line-height:16px;color:#222;left:731.5px;letter-spacing:0.465px;">$5,113,389.08</div>
<div class="t" style="top:289px;font-size:13.6px;line-height:16px;color:#666;right:534.83px;letter-spacing:0.367px;">Yellow</div>
<div class="abs" style="left:495px;top:281px;width:219.5px;height:31px;background:#e15759;border:1px solid #d94d50;"></div>
<div class="t" style="top:289px;font-size:13.2px;line-height:16px;color:#222;left:719.9px;letter-spacing:0.412px;">$4,856,755.63</div>
<div class="t" style="top:331px;font-size:13.6px;line-height:16px;color:#666;right:535.30px;letter-spacing:-0.105px;">Blue</div>
<div class="abs" style="left:495px;top:322px;width:103.0px;height:31px;background:#e15759;border:1px solid #d94d50;"></div>
<div class="t" style="top:331px;font-size:13.2px;line-height:16px;color:#222;left:603.4px;letter-spacing:0.412px;">$2,279,096.28</div>
<div class="t" style="top:372px;font-size:13.6px;line-height:16px;color:#666;right:536.05px;letter-spacing:-0.845px;">NA</div>
<div class="abs" style="left:495px;top:364px;width:19.8px;height:31px;background:#e15759;border:1px solid #d94d50;"></div>
<div class="t" style="top:373px;font-size:13.2px;line-height:16px;color:#222;left:520.2px;letter-spacing:0.513px;">$435,116.69</div>
<div class="t" style="top:414px;font-size:13.6px;line-height:16px;color:#666;right:534.40px;letter-spacing:0.799px;">Multi</div>
<div class="abs" style="left:495px;top:406px;width:3.6px;height:31px;background:#e15759;border:1px solid #d94d50;"></div>
<div class="t" style="top:414px;font-size:13.2px;line-height:16px;color:#222;left:505.3px;letter-spacing:0.551px;">$106,470.74</div>
<div class="t" style="top:455px;font-size:13.6px;line-height:16px;color:#666;right:534.81px;letter-spacing:0.390px;">White</div>
<div class="abs" style="left:495.3px;top:447px;width:1px;height:31px;background:#ecb6a4;"></div>
<div class="t" style="top:456px;font-size:13.2px;line-height:16px;color:#222;left:500.7px;letter-spacing:0.470px;">$5,106.32</div>
<div class="t" style="top:497px;font-size:13.6px;line-height:16px;color:#666;right:535.04px;letter-spacing:0.157px;">Silver/Black</div>
<div class="t" style="top:539px;font-size:13.6px;line-height:16px;color:#666;right:535.52px;letter-spacing:-0.317px;">Grey</div>
<div class="t" style="top:576px;font-size:13.4px;line-height:16px;color:#666;left:497.5px;letter-spacing:0.095px;">0M</div>
<div class="t" style="top:576px;font-size:13.4px;line-height:16px;color:#666;left:531.4px;letter-spacing:0.095px;">1M</div>
<div class="t" style="top:576px;font-size:13.4px;line-height:16px;color:#666;left:576.5px;letter-spacing:0.095px;">2M</div>
<div class="t" style="top:576px;font-size:13.4px;line-height:16px;color:#666;left:621.7px;letter-spacing:0.095px;">3M</div>
<div class="t" style="top:576px;font-size:13.4px;line-height:16px;color:#666;left:666.9px;letter-spacing:0.095px;">4M</div>
<div class="t" style="top:576px;font-size:13.4px;line-height:16px;color:#666;left:712.1px;letter-spacing:0.095px;">5M</div>
<div class="t" style="top:576px;font-size:13.4px;line-height:16px;color:#666;left:757.2px;letter-spacing:0.095px;">6M</div>
<div class="t" style="top:576px;font-size:13.4px;line-height:16px;color:#666;left:802.4px;letter-spacing:0.095px;">7M</div>
<div class="t" style="top:576px;font-size:13.4px;line-height:16px;color:#666;left:847.6px;letter-spacing:0.095px;">8M</div>
<div class="t" style="top:576px;font-size:13.4px;line-height:16px;color:#666;left:892.7px;letter-spacing:0.095px;">9M</div>
<div class="t" style="top:576px;font-size:13.4px;line-height:16px;color:#666;left:934.1px;letter-spacing:0.112px;">10M</div>
<div class="t" style="top:576px;font-size:13.4px;line-height:16px;color:#666;left:979.3px;letter-spacing:0.446px;">11M</div>
<div class="t" style="top:603px;font-size:12.8px;line-height:15px;color:#1e1e1e;left:712.8px;-webkit-text-stroke:0.55px #1e1e1e;letter-spacing:0.419px;">Sales Amount</div>
<svg style="left:804px;top:604.4px" width="11" height="10"><path d="M0 .8H10.4M0 4.8H6.6M0 8.8H3" stroke="#333" stroke-width="1.5"/></svg>
<div class="abs" style="left:945.3px;top:540.3px;width:63.4px;height:20.4px;background:#b3b6b8;border:none;border-radius:3px;"></div>
<div class="t" style="top:543px;font-size:13.2px;line-height:16px;color:#fff;left:955.6px;font-weight:bold;-webkit-text-stroke:0.35px #fff;letter-spacing:0.188px;">2 nulls</div>
<!-- annotation box -->
<div class="abs" style="left:225px;top:403px;width:172px;height:209px;border:2px solid #8c1d18;"></div>
</div></body></html>
